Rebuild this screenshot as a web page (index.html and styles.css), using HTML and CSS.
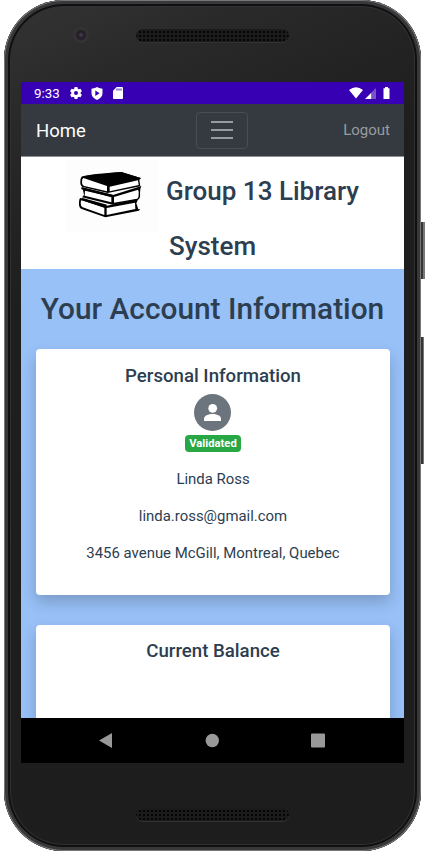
FILE: index.html
```html
<!DOCTYPE html>
<html lang="en">
<head>
<meta charset="utf-8">
<title>Your Account Information</title>
<link rel="stylesheet" href="styles.css">
</head>
<body>
<div class="device">
  <i class="power"></i><i class="volume"></i>
  <div class="bezel-top"><i class="camera"></i><i class="speaker"></i></div>
  <div class="screen">
    <div class="status">
      <span class="time">9:33</span>
      <svg class="gear" width="12" height="12" viewBox="0 0 12 12"><g fill="#fff"><circle cx="6" cy="6" r="4.500"/><path id="tooth" d="M4.600 0h2.800l.5 2.500H4.100zM4.600 12h2.800l.5-2.500H4.100z"/><path transform="rotate(60 6 6)" d="M4.600 0h2.800l.5 2.500H4.100zM4.600 12h2.800l.5-2.500H4.100z"/><path transform="rotate(120 6 6)" d="M4.600 0h2.800l.5 2.500H4.100zM4.600 12h2.800l.5-2.500H4.100z"/></g><circle cx="6" cy="6" r="2" fill="#3700b3"/></svg>
      <svg class="shield" width="12" height="13" viewBox="0 0 12 13"><path fill="#fff" fill-rule="evenodd" d="M6 0 8 1l3.500.8v4.700c0 3-2.300 5-5.500 6.500C2.800 11.500.5 9.500.5 6.500V1.800L4 1zM4.300 3.500v5.400L8.600 6.200z"/></svg>
      <svg class="sd" width="10" height="12" viewBox="0 0 10 12"><path fill="#fff" fill-rule="evenodd" d="M3.700 0H9q1 0 1 1v10q0 1-1 1H1q-1 0-1-1V3.700zM3.500 1.500v2h1v-2zm2 0v2h1v-2zm2 0v2h1v-2z"/></svg>
      <span class="grow"></span>
      <svg width="42" height="13" viewBox="0 0 42 13"><path fill="#fff" d="M0 3Q7-2.500 14 3L7 11.500zM16 12 22.500 5.500V12zM36 1.200V0h3v1.200h1.500V12h-6V1.200z"/><path fill="#7a52cb" d="M22.500 5.500 27 1v11h-4.500z"/></svg>
    </div>
    <nav class="navbar">
      <a class="brand">Home</a>
      <button class="toggler" aria-label="Menu"><i></i><i></i><i></i></button>
      <a class="logout">Logout</a>
    </nav>
    <header class="masthead">
      <div class="line">
        <svg class="books" width="93" height="60" viewBox="0 0 279 180">
          <rect y="-36" width="279" height="216" fill="#fdfdfd"/>
          <path d="M50 13 166 0l58 18 2-1L220 24 223 43 125 63 53 46Q42 43 43 29 43 15 50 13z"/>
          <path fill="#fff" d="M52 18 123 42V58L55 42Q48 40 48 29 48 20 52 18zM131 44 216 25 218 39 131 58z"/>
          <path d="M45 46 141 69 226 42Q222 50 222 63 224 80 216 83L140 98 48 76 54 69 51 54z"/>
          <path fill="#fff" d="M57 56 136 74V91L56 71zM144 75 214 54Q219 53 218 66 218 78 214 80L144 92z"/>
          <path d="M43 78 123 101 217 80 211 94 217 112 222 111 219 116 118 136 47 111Q38 108 39 94 39 80 43 78z"/>
          <path fill="#fff" d="M47 84 115 107V129L50 106Q44 104 44 94 44 85 47 84zM122 108 207 92 208 111 122 129z"/>
          <path d="M50 14Q60 7 166 0L224 18 126 40zM49 46 140 68 136 76 45 51zM50 78 123 98 117 107 42 83z"/>
        </svg>
        <span>Group 13 Library</span>
      </div>
      <div class="line second"><span>System</span></div>
    </header>
    <main class="content">
      <h1><span>Your Account Information</span></h1>
      <section class="card personal">
        <h2><span>Personal Information</span></h2>
        <svg class="avatar" width="37" height="37" viewBox="0 0 37 37"><circle cx="18.500" cy="18.500" r="18.500" fill="#6c757d"/><circle cx="18.700" cy="14.300" r="4.400" fill="#fff"/><path fill="#fff" d="M10 27v-2.200C10 21.500 14.500 20 18.500 20s8.500 1.500 8.500 4.800V27z"/></svg>
        <div class="badge">Validated</div>
        <p class="name">Linda Ross</p>
        <p>linda.ross@gmail.com</p>
        <p class="address">3456 avenue McGill, Montreal, Quebec</p>
      </section>
      <section class="card balance"><h2><span>Current Balance</span></h2></section>
    </main>
    <div class="android">
      <svg width="383" height="45" viewBox="0 0 383 45"><g fill="#999"><path d="M78 22.500 91 15v15z"/><circle cx="191.300" cy="22.500" r="6.700"/><rect x="290" y="15.500" width="14" height="14" rx="1"/></g></svg>
    </div>
  </div>
  <div class="bezel-bottom"><i class="speaker"></i></div>
</div>
</body>
</html>
```
FILE: styles.css
```css
* { box-sizing: border-box; }
body {
  margin: 0;
  height: 863px;
  overflow: hidden;
  background: #fff;
  color: #2c3e50;
  font-family: Roboto, "Liberation Sans", sans-serif;
}
.device {
  position: relative;
  width: 417px;
  height: 851px;
  margin-left: 4px;
  padding: 0 17px;
  border-radius: 60px;
  background: linear-gradient(155deg, #343434 0%, #292929 12%, #1e1e1e 30%, #1d1d1d 100%);
  box-shadow: inset 0 0 0 1px #77777a, inset 0 0 0 4px #39373a, inset 0 0 0 6px #101010, inset 0 0 0 7px #303030;
}
.power, .volume {
  position: absolute;
  left: 417px;
  width: 4px;
  background: linear-gradient(90deg, #373537 60%, #777 60%);
}
.power { top: 222px; height: 57px; }
.volume { top: 337px; height: 127px; width: 3px; }
.bezel-top { height: 82px; display: flex; align-items: flex-start; padding: 27px 0 0 52px; }
.camera {
  width: 16px;
  height: 16px;
  border-radius: 50%;
  background: radial-gradient(circle, #47354a 0 1px, #211d25 3px, #29272b 5px, #343233 6px);
}
.speaker {
  display: block;
  width: 153px;
  height: 13px;
  border-radius: 7px;
  background: radial-gradient(circle, #050505 0 .8px, transparent 1.2px) 2px 1px / 4px 4px, #1b1b1b;
  box-shadow: 0 1px 0 #323232;
}
.bezel-top .speaker { margin: 2px 0 0 47px; }
.screen { width: 383px; height: 681px; overflow: hidden; background: #fff; }
.status { height: 22px; background: #3700b3; display: flex; align-items: center; padding: 0 13px; color: #fff; }
.time { width: 36px; font-size: 13.400px; line-height: 22px; padding-top: 1px; }
.shield { margin-left: 9px; }
.sd { margin-left: 10px; }
.grow { flex: 1; }
.navbar {
  height: 53px;
  padding: 0 14px 0 15px;
  background: #343a40;
  border-bottom: 1px solid #8c8f93;
  display: flex;
  align-items: center;
}
.brand { width: 160px; padding-top: 1px; font-size: 18.500px; color: #fff; }
.toggler {
  width: 52px;
  height: 37px;
  padding: 0;
  background: none;
  border: 1px solid #484e53;
  border-radius: 4px;
  display: flex;
  flex-direction: column;
  align-items: center;
  justify-content: center;
  gap: 6px;
}
.toggler i { width: 22px; height: 2px; background: #999c9f; }
.logout { flex: 1; text-align: right; font-size: 15px; color: #999c9f; }
.masthead { height: 112px; font-size: 26px; font-weight: 500; }
.line { height: 74px; display: flex; align-items: flex-start; padding-left: 45px; line-height: 56px; white-space: nowrap; }
.books { margin-top: 15px; overflow: visible; }
.line span { margin-left: 7px; padding-top: 6px; }
.second { height: 38px; padding: 0; justify-content: center; line-height: 30px; }
.second span { margin: 0; padding: 0; }
.content { height: 449px; overflow: hidden; padding: 0 15px; background: #98c1f8; }
h1, h2, p { margin: 0; text-align: center; white-space: nowrap; }
h1 { height: 80px; line-height: 80px; font-size: 29.850px; font-weight: 500; display: flex; justify-content: center; }
.card {
  width: 354px;
  border-radius: 4px;
  background: #fff;
  box-shadow: 0 7px 15px rgba(0, 0, 0, .2);
  display: flex;
  flex-direction: column;
  align-items: center;
}
.personal { height: 246px; padding-top: 16px; }
.card h2 { font-size: 18.650px; font-weight: 500; line-height: 22px; }
.avatar { margin: 7px 1px 0 0; }
.badge {
  width: 56px;
  height: 17px;
  margin-top: 4px;
  border-radius: 4px;
  background: #28a745;
  color: #fff;
  font-size: 11.200px;
  font-weight: 700;
  line-height: 17px;
  text-align: center;
}
p { font-size: 14.930px; line-height: 22px; margin-top: 15px; }
.name { margin-top: 16px; }
.balance { height: 200px; margin-top: 30px; padding-top: 15px; }
.android { height: 45px; background: #000; }
.android svg { display: block; }
.bezel-bottom { height: 88px; padding: 45px 0 0 115px; }
```
